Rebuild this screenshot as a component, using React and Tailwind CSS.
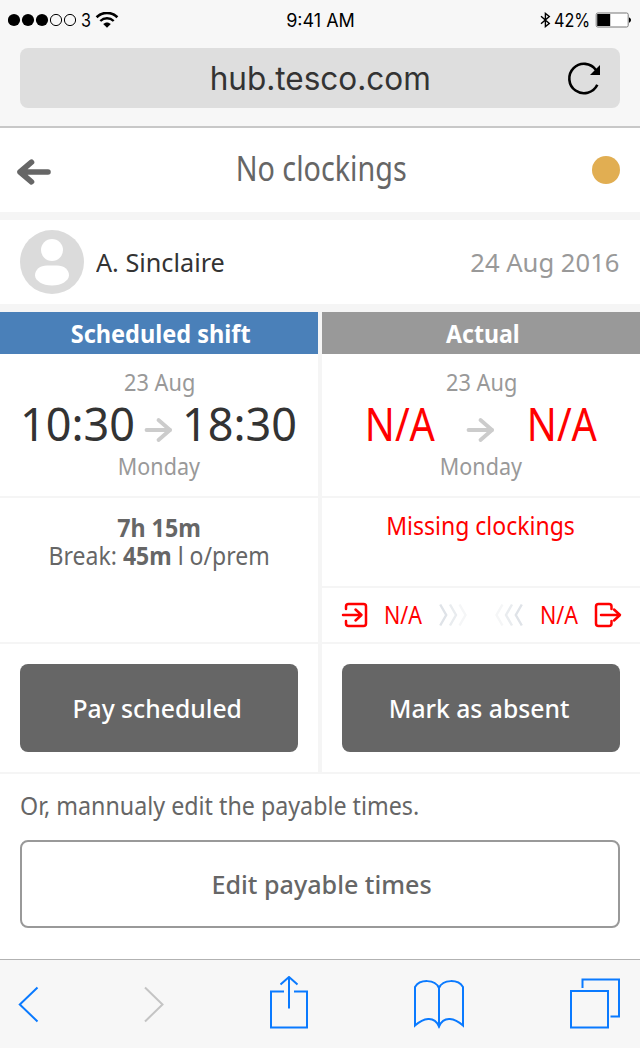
const noto = "font-['Noto_Sans','Open_Sans',sans-serif]";
const inter = "font-['Inter','Liberation_Sans',sans-serif]";

function Label({ className, children }) {
  return <span className={`inline-block whitespace-nowrap ${className}`}>{children}</span>;
}

function StatusBar() {
  return (
    <div className={`grid h-10 grid-cols-3 items-center px-2 text-[18px] text-black ${inter}`}>
      <div className="flex items-center">
        <svg width="70" height="14" viewBox="0 0 70 14">
          {[6, 20, 34].map((x) => (
            <circle key={x} cx={x} cy="7" r="6.1" />
          ))}
          {[48, 62].map((x) => (
            <circle key={x} cx={x} cy="7" r="5.6" fill="none" stroke="#000" />
          ))}
        </svg>
        <Label className="ml-[3px] origin-left scale-x-[0.9]">3</Label>
        <svg className="ml-[3px]" width="24" height="16" viewBox="0 0 24 16" fill="none" stroke="#000">
          <path d="M1.6 5.2C7.4 -.5 16.6 -.5 22.4 5.2" strokeWidth="2.6" />
          <path d="M5.3 9C9.2 5.3 14.8 5.3 18.7 9" strokeWidth="2.4" />
          <path d="M8.2 12C10.3 9.9 13.7 9.9 15.8 12L12 15.7Z" fill="#000" stroke="none" />
        </svg>
      </div>
      <div className="pl-px text-center">
        <Label className="">9:41 AM</Label>
      </div>
      <div className="flex items-center justify-end pr-px">
        <svg width="11" height="16" viewBox="0 0 11 16" fill="none" stroke="#000" strokeWidth="1.4">
          <path d="M1 4.3L9.3 11.5L5.4 14.6V1.4L9.3 4.5L1 11.7" />
        </svg>
        <Label className="-mr-[1px] ml-[3px] origin-left scale-x-[0.9]">42%</Label>
        <svg className="ml-[2px]" width="36" height="16" viewBox="0 0 36 16">
          <rect x="1.2" y="1" width="32" height="14" rx="1.6" fill="#fff" stroke="#777" />
          <rect x="2.2" y="2" width="13" height="12" />
          <path d="M34 5.2C35.4 6 36 7 36 8S35.4 10 34 10.8Z" />
        </svg>
      </div>
    </div>
  );
}

function AddressBar() {
  return (
    <div className={`mx-5 mt-2 grid h-[60px] grid-cols-[1fr_auto_1fr] items-center rounded-lg bg-[#dedede] text-[32px] text-[#333] ${inter}`}>
      <span />
      <Label className="scale-x-[0.985] pt-[2px]">hub.tesco.com</Label>
      <svg className="mr-[18px] justify-self-end" width="36" height="36" viewBox="0 0 36 36">
        <path d="M31.300 24.800A14.700 14.700 0 1 1 30 10" fill="none" stroke="#000" strokeWidth="2.600" />
        <path d="M34 5V15H24Z" />
      </svg>
    </div>
  );
}

function ArrowRight() {
  return (
    <svg className="mt-3 -ml-px" width="29" height="26" viewBox="0 0 29 26" fill="none" stroke="#ccc" strokeWidth="3.800" strokeLinecap="round" strokeLinejoin="round">
      <path d="M2.500 13H26" />
      <path d="M14.500 3L26 13L14.500 23" />
    </svg>
  );
}

function Shift({ from, to, tone }) {
  return (
    <div className="flex h-[142px] flex-col items-center pt-[14px] text-[23px] leading-7 text-[#999]">
      <Label className="ml-px scale-x-[0.945]">23 Aug</Label>
      <div className={`flex h-14 w-full items-center justify-between pl-5 pr-[21px] text-[45px] leading-[56px] ${tone}`}>
        <span className="flex w-[115px] justify-center">{from}</span>
        <ArrowRight />
        <span className="flex w-[115px] justify-center">{to}</span>
      </div>
      <Label className="scale-x-[0.935]">Monday</Label>
    </div>
  );
}

const missing = <Label className="scale-x-[0.88]">N/A</Label>;

function Chevrons({ flip }) {
  return (
    <svg className={flip ? "-scale-x-100" : ""} width="28" height="24" viewBox="0 0 28 24" fill="none" strokeWidth="2.4">
      <path d="M1.200 1.500L7.200 12L1.200 22.500" stroke="#dfe3e8" />
      <path d="M11 1.500L17 12L11 22.500" stroke="#e9ecef" />
      <path d="M20.500 1.500L26.500 12L20.500 22.500" stroke="#f5f6f7" />
    </svg>
  );
}

function Clockings() {
  const icon = { width: 28, height: 26, viewBox: "0 0 28 26", fill: "none", stroke: "#f00", strokeWidth: 2.5, strokeLinecap: "round", strokeLinejoin: "round" };
  return (
    <div className="flex h-[54px] items-center justify-between pl-[19px] pr-[18px] text-[25px] leading-7 text-[#f00]">
      <div className="flex items-center">
        <svg {...icon}>
          <path d="M5 7V4.500Q5 2 7.500 2H22.500Q25 2 25 4.500V21.500Q25 24 22.500 24H7.500Q5 24 5 21.500V19" />
          <path d="M2 13H20M14.500 7.500L20.500 13L14.500 18.500" />
        </svg>
        <Label className="ml-[15px] origin-left scale-x-[0.86] pb-[2px]">N/A</Label>
        <span className="ml-[11px] flex"><Chevrons /></span>
      </div>
      <div className="flex items-center">
        <span className="flex"><Chevrons flip /></span>
        <Label className="ml-[17px] origin-left scale-x-[0.86] pb-[2px]">N/A</Label>
        <svg {...icon} className="ml-[10px]">
          <path d="M17.500 7V4.500Q17.500 2 15 2H4.500Q2 2 2 4.500V21.500Q2 24 4.500 24H15Q17.500 24 17.500 21.500V19" />
          <path d="M7 13H25.500M20 7.500L26 13L20 18.500" />
        </svg>
      </div>
    </div>
  );
}

function PrimaryButton({ children }) {
  return (
    <div className="h-[128px] px-5 pt-5">
      <button className="h-[88px] w-full rounded-lg bg-[#666] pr-[3px] text-[26px] font-medium leading-[88px] text-white">
        <Label className="scale-x-[0.95]">{children}</Label>
      </button>
    </div>
  );
}

function ColumnTitle({ className, children }) {
  return (
    <div className={`h-[42px] pl-[3px] text-center text-[25px] font-bold leading-[42px] text-white ${className}`}>
      {children}
    </div>
  );
}

function Toolbar() {
  const blue = { fill: "none", stroke: "#0a7aff", strokeWidth: 2 };
  return (
    <div className="flex h-[89px] items-center justify-between border-t border-[#b2b2b2] bg-[#f7f7f7] pl-[17px] pr-[19px]">
      <svg width="22" height="56" viewBox="0 0 22 56" {...blue}>
        <path d="M20.500 11.500L2.800 28.500L20.500 45.500" />
      </svg>
      <svg width="22" height="56" viewBox="0 0 22 56" {...blue} stroke="#c4c4c4">
        <path d="M2 11.500L19.500 28.500L2 45.500" />
      </svg>
      <svg width="40" height="56" viewBox="0 0 40 56" {...blue}>
        <path d="M15 15.500H2V51.500H38V15.500H25M20 32.500V1M11.500 8.500L20 1L28.500 8.500" />
      </svg>
      <svg width="52" height="56" viewBox="0 0 52 56" {...blue}>
        <path d="M26 12C22 3 7 3 2 11V49.500C10 42.500 21 39 26 50.500C31 39 42 42.500 50 49.500V11C45 3 30 3 26 12V51.500" />
      </svg>
      <svg width="52" height="56" viewBox="0 0 52 56" {...blue}>
        <path d="M2 15H39V51.500H2ZM13.500 12V3.500H50V40.500H41.500" />
      </svg>
    </div>
  );
}

export default function App() {
  return (
    <div className={`flex h-[1048px] w-[640px] flex-col overflow-hidden bg-white ${noto}`}>
      <div className="h-32 border-b-2 border-[#c8c8c8] bg-[#f7f7f7]">
        <StatusBar />
        <AddressBar />
      </div>

      <header className="grid h-[92px] grid-cols-[1fr_auto_1fr] items-center border-b-8 border-[#f5f5f5] px-4 text-[34px] text-[#666]">
        <svg className="mt-[4px]" width="36" height="28" viewBox="0 0 36 28" fill="none" stroke="#666" strokeWidth="5.600" strokeLinecap="round" strokeLinejoin="round">
          <path d="M32 14H4M15.500 4.200L4 14L15.500 23.800" />
        </svg>
        <Label className="ml-[2px] scale-x-[0.845] pb-[4px]">No clockings</Label>
        <span className="mr-1 size-7 justify-self-end rounded-full bg-[#e1ae52]" />
      </header>

      <div className="flex h-[92px] items-center border-b-8 border-[#f5f5f5] px-5 text-[26px]">
        <svg width="64" height="64" viewBox="0 0 64 64">
          <circle cx="32" cy="32" r="32" fill="#dbdbdb" />
          <circle cx="32" cy="20" r="11" fill="#fff" />
          <path d="M27 35.500H37C44 35.500 49 39.500 49 45.500C49 50.500 41.500 55.500 32 55.500S15 50.500 15 45.500C15 39.500 20 35.500 27 35.500Z" fill="#fff" />
        </svg>
        <Label className="ml-3 origin-left scale-x-[0.97] pt-px text-[#333]">A. Sinclaire</Label>
        <Label className="ml-auto mr-px origin-right scale-x-[0.985] pt-px text-[#999]">24 Aug 2016</Label>
      </div>

      <div className="flex h-[462px] gap-1 border-b-2 border-[#f5f5f5] bg-[#f5f5f5]">
        <section className="flex w-[318px] flex-col gap-[2px] *:bg-white">
          <div>
            <ColumnTitle className="bg-[#4a80b9]">
              <Label className="scale-x-[0.94]">Scheduled shift</Label>
            </ColumnTitle>
            <Shift from="10:30" to="18:30" tone="text-[#333]" />
          </div>
          <div className="flex h-[144px] flex-col items-center pt-[15px] text-[25px] leading-7 text-[#666]">
            <Label className="scale-x-[0.93] font-bold">7h 15m</Label>
            <Label className="scale-x-[0.92]">
              Break: <b>45m</b> l o/prem
            </Label>
          </div>
          <PrimaryButton>Pay scheduled</PrimaryButton>
        </section>
        <section className="flex w-[318px] flex-col gap-[2px] *:bg-white">
          <div>
            <ColumnTitle className="bg-[#999]">
              <Label className="scale-x-[0.925]">Actual</Label>
            </ColumnTitle>
            <Shift from={missing} to={missing} tone="text-[#f00]" />
          </div>
          <div className="flex h-[88px] justify-center pt-[13px] text-[25px] leading-7 text-[#f00]">
            <Label className="scale-x-[0.92]">Missing clockings</Label>
          </div>
          <Clockings />
          <PrimaryButton>Mark as absent</PrimaryButton>
        </section>
      </div>

      <div className="h-[185px] px-5 pt-[17px] text-[#666]">
        <p className="h-[49px] text-[25px] leading-7">
          <Label className="origin-left scale-x-[0.93]">Or, mannualy edit the payable times.</Label>
        </p>
        <button className="h-[88px] w-full rounded-lg border-2 border-[#999] bg-white pl-[4px] pt-[2px] text-[25px] font-medium">
          <Label className="scale-x-[1.005]">Edit payable times</Label>
        </button>
      </div>

      <Toolbar />
    </div>
  );
}
